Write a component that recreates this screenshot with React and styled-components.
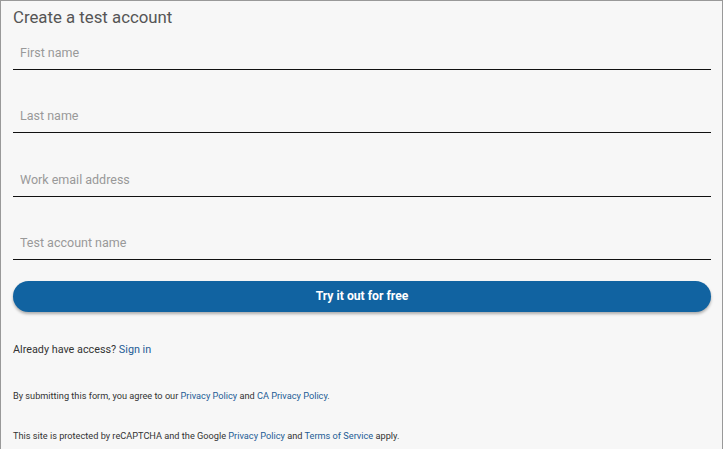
import React from 'react'
import styled, { createGlobalStyle } from 'styled-components'

const Global = createGlobalStyle`
	html, body {
		margin: 0;
		padding: 0;
		background: #f7f7f7;
	}
	* {
		box-sizing: border-box;
	}
`

const fields = ['First name', 'Last name', 'Work email address', 'Test account name']

export default function App() {
	return (
		<Page>
			<Global />
			<Title>Create a test account</Title>
			<Fields>
				{fields.map(f => (
					<Field key={f}>
						<Input placeholder={f} />
					</Field>
				))}
			</Fields>
			<Submit type='button'>Try it out for free</Submit>
			<Access>Already have access? <Link href='#'>Sign in</Link></Access>
			<Small>
				By submitting this form, you agree to our <Link href='#'>Privacy Policy</Link> and <Link href='#'>CA Privacy Policy</Link>.
			</Small>
			<Small>
				This site is protected by reCAPTCHA and the Google <Link href='#'>Privacy Policy</Link> and <Link href='#'>Terms of Service</Link> apply.
			</Small>
		</Page>
	)
}

const Page = styled.div`
	height: 449px;
	border: 1px solid #999;
	border-bottom: none;
	padding: 6px 11px 0 12px;
	background: #f7f7f7;
	font-family: Roboto, "Liberation Sans", sans-serif;
	display: flex;
	flex-direction: column;
`
const Title = styled.h2`
	margin: 0;
	font-size: 16.8px;
	font-weight: 400;
	color: #555;
	line-height: 20px;
`
const Fields = styled.div`
	display: flex;
	flex-direction: column;
	gap: 24.3px;
	margin-top: 4px;
`
const Field = styled.div`
	height: 39px;
	border-bottom: 1.5px solid #111;
	display: flex;
	align-items: flex-end;
`
const Input = styled.input`
	width: 100%;
	border: none;
	background: transparent;
	outline: none;
	font-family: inherit;
	font-size: 12.5px;
	color: #333;
	padding: 0 7px 9px;
	&::placeholder {
		color: #999;
	}
`
const Submit = styled.button`
	margin-top: 21px;
	height: 31px;
	border: none;
	border-radius: 16px;
	background: #1163a1;
	color: #fff;
	font-family: inherit;
	font-weight: 700;
	font-size: 12.2px;
	box-shadow: 0 2px 3px rgba(0, 0, 0, 0.3);
	cursor: pointer;
`
const Access = styled.p`
	margin: 31px 0 0;
	font-size: 10.8px;
	color: #333;
	line-height: 14px;
`
const Link = styled.a`
	color: #1d5c95;
	text-decoration: none;
`
const Small = styled.p`
	margin: 33px 0 0;
	font-size: 9.2px;
	color: #333;
	line-height: 12px;
	& + & {
		margin-top: 28px;
	}
`
